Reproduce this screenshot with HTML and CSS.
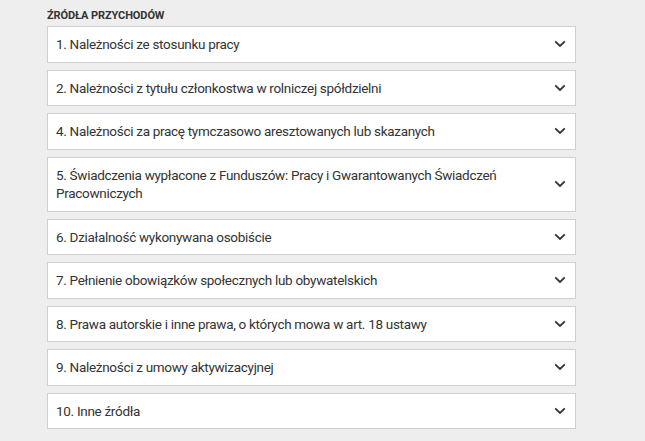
FILE: index.html
```html
<!DOCTYPE html>
<html lang="pl">
<head>
<meta charset="utf-8">
<title>Źródła przychodów</title>
<link rel="stylesheet" href="styles.css">
</head>
<body>
<section class="sources">
  <h2 class="sources-title">Źródła przychodów</h2>
  <div class="accordion">
    <div class="acc-item"><span class="acc-label">1. Należności ze stosunku pracy</span><svg class="chev" viewBox="0 0 12 8"><path d="M1.2 1.4 L6 6 L10.8 1.4"/></svg></div>
    <div class="acc-item"><span class="acc-label">2. Należności z tytułu członkostwa w rolniczej spółdzielni</span><svg class="chev" viewBox="0 0 12 8"><path d="M1.2 1.4 L6 6 L10.8 1.4"/></svg></div>
    <div class="acc-item"><span class="acc-label">4. Należności za pracę tymczasowo aresztowanych lub skazanych</span><svg class="chev" viewBox="0 0 12 8"><path d="M1.2 1.4 L6 6 L10.8 1.4"/></svg></div>
    <div class="acc-item"><span class="acc-label">5. Świadczenia wypłacone z Funduszów: Pracy i Gwarantowanych Świadczeń Pracowniczych</span><svg class="chev" viewBox="0 0 12 8"><path d="M1.2 1.4 L6 6 L10.8 1.4"/></svg></div>
    <div class="acc-item"><span class="acc-label">6. Działalność wykonywana osobiście</span><svg class="chev" viewBox="0 0 12 8"><path d="M1.2 1.4 L6 6 L10.8 1.4"/></svg></div>
    <div class="acc-item"><span class="acc-label">7. Pełnienie obowiązków społecznych lub obywatelskich</span><svg class="chev" viewBox="0 0 12 8"><path d="M1.2 1.4 L6 6 L10.8 1.4"/></svg></div>
    <div class="acc-item"><span class="acc-label">8. Prawa autorskie i inne prawa, o których mowa w art. 18 ustawy</span><svg class="chev" viewBox="0 0 12 8"><path d="M1.2 1.4 L6 6 L10.8 1.4"/></svg></div>
    <div class="acc-item"><span class="acc-label">9. Należności z umowy aktywizacyjnej</span><svg class="chev" viewBox="0 0 12 8"><path d="M1.2 1.4 L6 6 L10.8 1.4"/></svg></div>
    <div class="acc-item"><span class="acc-label">10. Inne źródła</span><svg class="chev" viewBox="0 0 12 8"><path d="M1.2 1.4 L6 6 L10.8 1.4"/></svg></div>
  </div>
</section>
</body>
</html>
```
FILE: styles.css
```css
html, body {
  margin: 0;
  padding: 0;
  background: #eeeeee;
}
body {
  font-family: Roboto, "Liberation Sans", sans-serif;
  color: #333333;
}
.sources {
  width: 529px;
  margin-left: 47px;
  padding-top: 9px;
}
.sources-title {
  margin: 0 0 3px 0;
  font-size: 11px;
  line-height: 14px;
  font-weight: 700;
  text-transform: uppercase;
  letter-spacing: -0.1px;
  color: #333333;
}
.accordion {
  display: flex;
  flex-direction: column;
  gap: 7px;
}
.acc-item {
  display: flex;
  align-items: center;
  justify-content: space-between;
  background: #ffffff;
  border: 1px solid #cfcfcf;
  padding: 8px 9px 8px 8px;
  font-size: 13.5px;
  line-height: 18.5px;
  letter-spacing: -0.3px;
}
.acc-label {
  flex: 1;
  padding-right: 40px;
}
.chev {
  width: 12px;
  height: 8px;
  flex: none;
}
.chev path {
  fill: none;
  stroke: #333333;
  stroke-width: 1.8;
}
```
